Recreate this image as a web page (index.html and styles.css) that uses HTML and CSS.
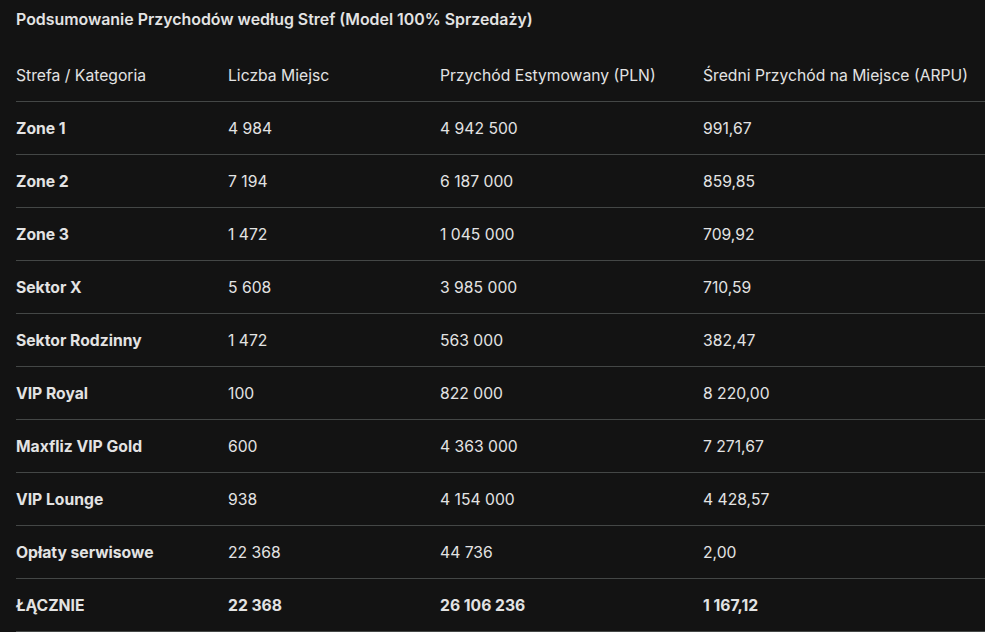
FILE: index.html
```html
<!DOCTYPE html>
<html lang="pl">
<head>
<meta charset="utf-8">
<link rel="stylesheet" href="styles.css">
</head>
<body>
<div class="page">
  <h2 class="title">Podsumowanie Przychodów według Stref (Model 100% Sprzedaży)</h2>
  <table class="summary">
    <thead>
      <tr>
        <th class="c1">Strefa / Kategoria</th>
        <th class="c2">Liczba Miejsc</th>
        <th class="c3">Przychód Estymowany (PLN)</th>
        <th class="c4">Średni Przychód na Miejsce (ARPU)</th>
      </tr>
    </thead>
    <tbody>
      <tr><td class="name">Zone 1</td><td>4 984</td><td>4 942 500</td><td>991,67</td></tr>
      <tr><td class="name">Zone 2</td><td>7 194</td><td>6 187 000</td><td>859,85</td></tr>
      <tr><td class="name">Zone 3</td><td>1 472</td><td>1 045 000</td><td>709,92</td></tr>
      <tr><td class="name">Sektor X</td><td>5 608</td><td>3 985 000</td><td>710,59</td></tr>
      <tr><td class="name">Sektor Rodzinny</td><td>1 472</td><td>563 000</td><td>382,47</td></tr>
      <tr><td class="name">VIP Royal</td><td>100</td><td>822 000</td><td>8 220,00</td></tr>
      <tr><td class="name">Maxfliz VIP Gold</td><td>600</td><td>4 363 000</td><td>7 271,67</td></tr>
      <tr><td class="name">VIP Lounge</td><td>938</td><td>4 154 000</td><td>4 428,57</td></tr>
      <tr><td class="name">Opłaty serwisowe</td><td>22 368</td><td>44 736</td><td>2,00</td></tr>
      <tr class="total"><td>ŁĄCZNIE</td><td>22 368</td><td>26 106 236</td><td>1 167,12</td></tr>
    </tbody>
  </table>
</div>
</body>
</html>
```
FILE: styles.css
```css
html, body {
  margin: 0;
  padding: 0;
  background: #131313;
  overflow: hidden;
}
.page {
  padding: 0 0 0 16px;
  font-family: Inter, Roboto, sans-serif;
  color: #e3e3e3;
  font-size: 15.7px;
}
.title {
  margin: 0;
  height: 49px;
  padding-top: 10px;
  box-sizing: border-box;
  font-size: 15.9px;
  font-weight: 600;
  line-height: 20px;
}
.summary {
  border-collapse: collapse;
  table-layout: fixed;
  width: 984px;
}
.summary th,
.summary td {
  text-align: left;
  padding: 0 16px 0 0;
  height: 52px;
  border-bottom: 1px solid #444746;
  font-weight: 400;
  vertical-align: middle;
  white-space: nowrap;
}
.c1, .c2 { width: 196px; }
.c3 { width: 247px; }
.c4 { width: 281px; }
.summary td.name { font-weight: 700; }
.total td { font-weight: 700; }
```
